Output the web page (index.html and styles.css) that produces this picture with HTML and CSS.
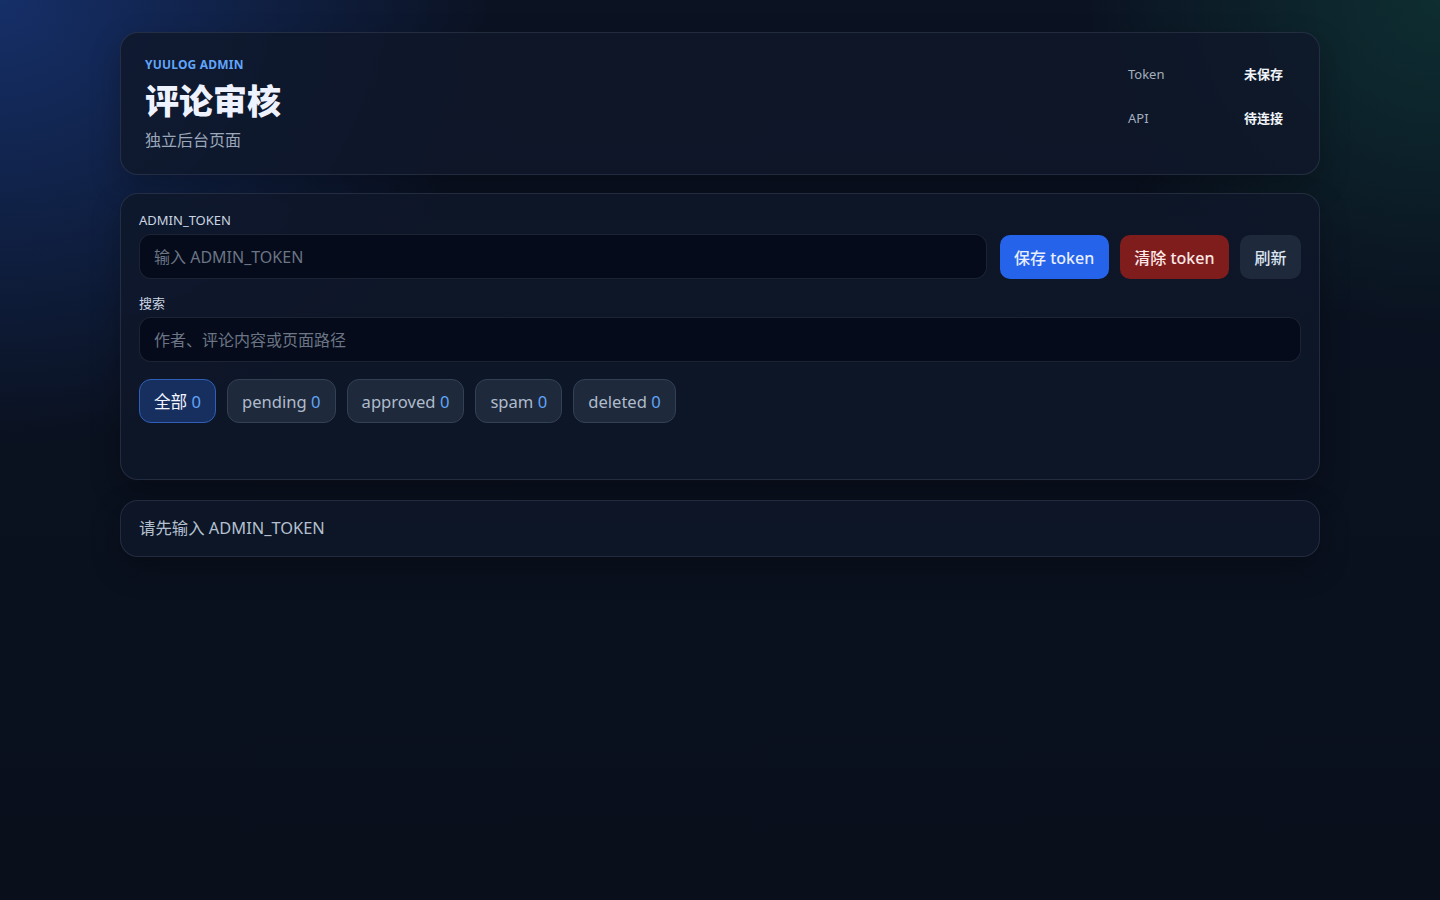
FILE: index.html
```html
<!DOCTYPE html>
<html lang="zh-CN">
<head>
    <meta charset="UTF-8">
    <meta name="viewport" content="width=device-width, initial-scale=1.0">
    <title>评论审核 - Yuulog Admin</title>
    <link rel="stylesheet" href="styles.css">
</head>
<body>
    <main class="shell">
        <header class="card hero">
            <div class="hero-text">
                <div class="eyebrow">YUULOG ADMIN</div>
                <h1>评论审核</h1>
                <p class="subtitle">独立后台页面</p>
            </div>
            <dl class="status">
                <dt>Token</dt>
                <dd id="tokenState">未保存</dd>
                <dt>API</dt>
                <dd id="apiState">待连接</dd>
            </dl>
        </header>

        <section class="card panel">
            <label class="field-label" for="tokenInput">ADMIN_TOKEN</label>
            <div class="token-row">
                <input id="tokenInput" class="text-input" type="password" placeholder="输入 ADMIN_TOKEN">
                <button class="btn btn-primary" id="saveBtn">保存 token</button>
                <button class="btn btn-danger" id="clearBtn">清除 token</button>
                <button class="btn btn-muted" id="refreshBtn">刷新</button>
            </div>

            <label class="field-label" for="searchInput">搜索</label>
            <input id="searchInput" class="text-input" type="text" placeholder="作者、评论内容或页面路径">

            <div class="filters">
                <button class="chip active">全部 <span class="count">0</span></button>
                <button class="chip">pending <span class="count">0</span></button>
                <button class="chip">approved <span class="count">0</span></button>
                <button class="chip">spam <span class="count">0</span></button>
                <button class="chip">deleted <span class="count">0</span></button>
            </div>
            <div class="bulk-area"></div>
        </section>

        <section class="card notice">
            请先输入 ADMIN_TOKEN
        </section>
    </main>
</body>
</html>
```

FILE: styles.css
```css
html, body {
    margin: 0;
    min-height: 100%;
}
body {
    background-color: #0a101c;
    background-image:
        radial-gradient(ellipse 620px 560px at 0% 0%, rgba(28, 66, 150, 0.6), transparent 80%),
        radial-gradient(ellipse 460px 420px at 100% 0%, rgba(18, 88, 72, 0.4), transparent 80%),
        linear-gradient(180deg, #0b1222 0%, #09101c 100%);
    background-repeat: no-repeat;
    min-height: 100vh;
    color: #e2e8f0;
    font-family: "Noto Sans", "Noto Sans CJK SC", sans-serif;
}
.shell {
    width: 1200px;
    margin: 0 auto;
    padding-top: 32px;
    display: flex;
    flex-direction: column;
    gap: 18px;
}
.card {
    background: rgba(15, 23, 42, 0.82);
    border: 1px solid rgba(148, 163, 184, 0.16);
    border-radius: 18px;
    box-shadow: 0 12px 30px rgba(0, 0, 0, 0.25);
}
.hero {
    display: flex;
    justify-content: space-between;
    align-items: flex-start;
    padding: 23px 24px 22px;
}
.eyebrow {
    color: #60a5fa;
    font-size: 12px;
    font-weight: 700;
    letter-spacing: 0.2px;
    line-height: 18px;
}
.hero h1 {
    margin: 5px 0 0;
    font-size: 34px;
    font-weight: 800;
    line-height: 44px;
    color: #eef2ff;
}
.subtitle {
    margin: 5px 0 0;
    font-size: 16px;
    line-height: 24px;
    color: #9aa8ba;
}
.status {
    display: grid;
    grid-template-columns: 116px auto;
    row-gap: 24px;
    margin: 8px 12px 0 0;
    font-size: 13px;
    line-height: 20px;
}
.status dt {
    color: #a3afbf;
}
.status dd {
    margin: 0;
    color: #f1f5f9;
    font-weight: 700;
}
.panel {
    padding: 16px 18px 18px;
}
.field-label {
    display: block;
    font-size: 13px;
    line-height: 20px;
    color: #cbd5e1;
    margin-bottom: 4px;
}
.token-row {
    display: flex;
    align-items: center;
    gap: 11px;
    margin-bottom: 14px;
}
.token-row .text-input {
    flex: 1;
    margin-right: 2px;
}
.text-input {
    box-sizing: border-box;
    width: 100%;
    height: 45px;
    padding: 0 14px;
    background: #050b1a;
    border: 1px solid rgba(148, 163, 184, 0.16);
    border-radius: 12px;
    color: #e2e8f0;
    font-family: inherit;
    font-size: 16px;
    outline: none;
}
.text-input::placeholder {
    color: #6b7585;
}
.btn {
    height: 44px;
    padding: 0 14.5px;
    border: none;
    border-radius: 10px;
    font-family: inherit;
    font-size: 16px;
    font-weight: 500;
    cursor: pointer;
    white-space: nowrap;
}
.btn-primary {
    background: #2563eb;
    color: #e8efff;
}
.btn-danger {
    background: #7f1d1d;
    color: #fde8e8;
}
.btn-muted {
    background: #1e293b;
    color: #dbe4f0;
}
.filters {
    display: flex;
    gap: 11px;
    margin-top: 17px;
}
.chip {
    height: 44px;
    padding: 0 14px;
    background: #1e293b;
    border: 1px solid #334155;
    border-radius: 12px;
    color: #aebbcc;
    font-family: inherit;
    font-size: 16.6px;
    cursor: pointer;
}
.chip.active {
    background: #172f5e;
    border-color: #2f5fb8;
    color: #f1f5ff;
}
.count {
    color: #60a5fa;
}
.bulk-area {
    height: 38px;
}
.notice {
    margin-top: 2px;
    padding: 16px 18px 17px;
    font-size: 16.4px;
    line-height: 22px;
    color: #b4c0d0;
}
```
